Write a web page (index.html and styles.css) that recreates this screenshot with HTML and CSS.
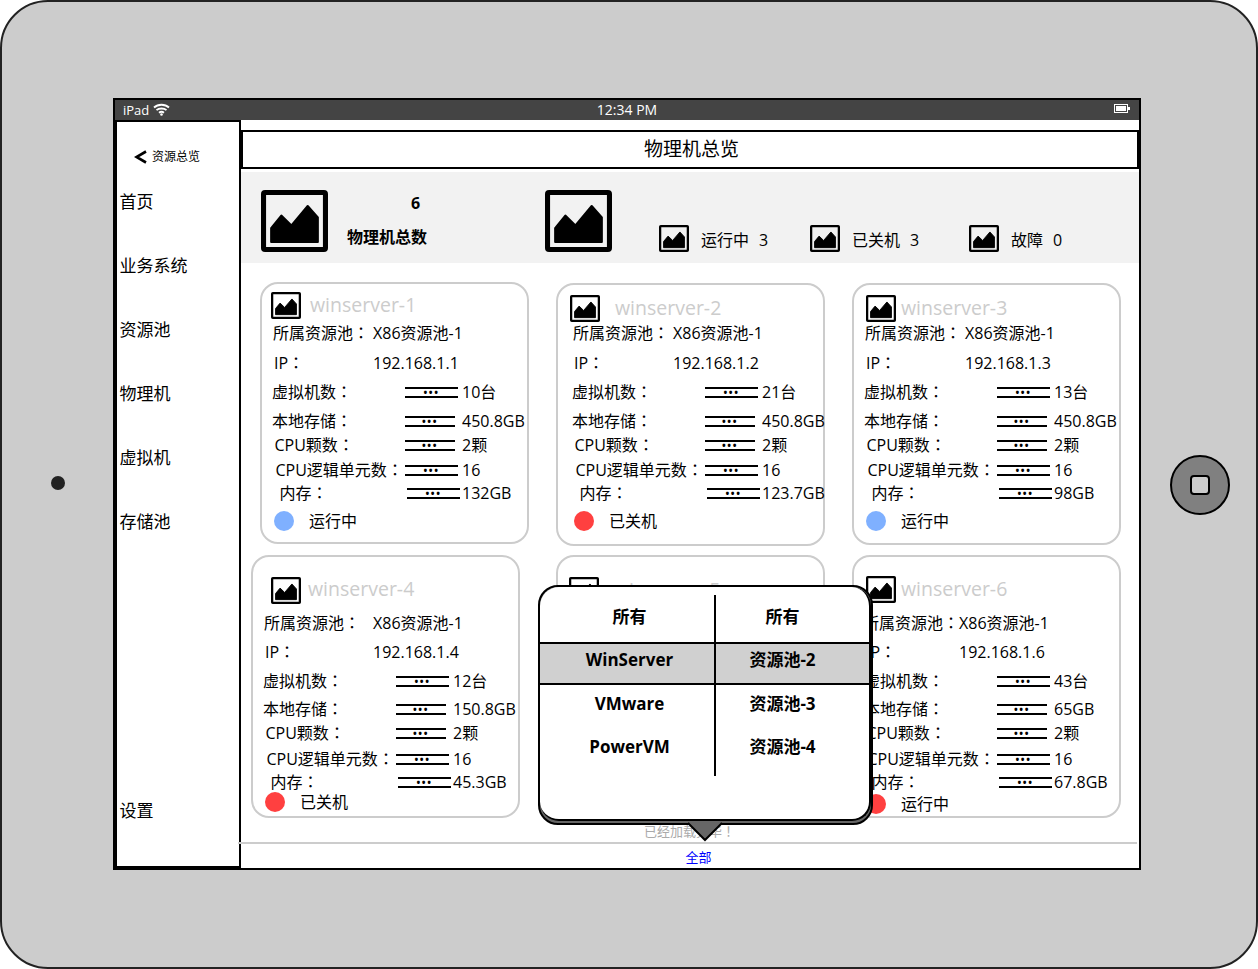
FILE: index.html
```html
<!DOCTYPE html>
<html>
<head>
<meta charset="utf-8">
<title>物理机总览</title>
<link rel="stylesheet" href="styles.css">
</head>
<body>
<svg class="defs" width="0" height="0" aria-hidden="true">
  <symbol id="pic" viewBox="0 0 66 62" preserveAspectRatio="none">
    <rect x="2.5" y="2.5" width="61" height="57" rx="1.5" fill="none" stroke="#000" stroke-width="5"/>
    <path d="M10 52V38L20 25.500 30 35.500 46 16 56 27.500V52Z" fill="#000" stroke="#000" stroke-width="2" stroke-linejoin="round"/>
  </symbol>
</svg>
<div class="device">
  <div class="camera"></div>
  <div class="screen">
    <div class="statusbar">
      <div class="status-left">
        <span>iPad</span>
        <svg class="wifi" width="17" height="13" viewBox="0 0 17 13"><path d="M1 4.500C5 .8 12 .8 16 4.500M3.500 7.200C6 4.900 11 4.900 13.500 7.200M6 9.700C7.300 8.700 9.700 8.700 11 9.700" fill="none" stroke="#fff" stroke-width="1.800"/><circle cx="8.500" cy="11.500" r="1.300" fill="#fff"/></svg>
      </div>
      <span class="clock">12:34 PM</span>
      <svg class="battery" width="16" height="9" viewBox="0 0 16 9"><rect x=".5" y=".5" width="13" height="8" fill="none" stroke="#fff"/><rect x="2" y="2" width="10" height="5" fill="#fff"/><rect x="14" y="3" width="2" height="3" fill="#fff"/></svg>
    </div>
    <div class="workspace">
      <nav class="sidebar">
        <div class="back">
          <svg class="chevron" width="13" height="14" viewBox="0 0 13 14"><path d="M12 1.500 2.500 7 12 12.500" fill="none" stroke="#000" stroke-width="2.600"/></svg>
          <span>资源总览</span>
        </div>
        <a class="nav-item">首页</a>
        <a class="nav-item">业务系统</a>
        <a class="nav-item">资源池</a>
        <a class="nav-item">物理机</a>
        <a class="nav-item">虚拟机</a>
        <a class="nav-item">存储池</a>
        <a class="nav-item nav-end">设置</a>
      </nav>
      <main class="main">
        <h1 class="title">物理机总览</h1>
        <section class="summary">
          <svg class="pic-big"><use href="#pic"/></svg>
          <div class="total"><b class="total-num">6</b><b class="total-label">物理机总数</b></div>
          <svg class="pic-big second"><use href="#pic"/></svg>
          <div class="stat first"><svg class="pic-small"><use href="#pic"/></svg><span class="stat-label">运行中</span><span>3</span></div>
          <div class="stat"><svg class="pic-small"><use href="#pic"/></svg><span class="stat-label">已关机</span><span>3</span></div>
          <div class="stat third"><svg class="pic-small"><use href="#pic"/></svg><span class="stat-label">故障</span><span>0</span></div>
        </section>
        <section class="cards">
          <article class="card card-1">
            <header class="head"><svg class="pic-small"><use href="#pic"/></svg><span class="name">winserver-1</span></header>
            <div class="row pool"><span class="lab">所属资源池<span class="colon">：</span></span><span>X86资源池-1</span></div>
            <div class="row ip"><span class="lab">IP<span class="colon">：</span></span><span>192.168.1.1</span></div>
            <div class="row vm"><span class="lab">虚拟机数<span class="colon">：</span></span><span class="gauge"><i>•••</i></span><span>10台</span></div>
            <div class="row store"><span class="lab">本地存储<span class="colon">：</span></span><span class="gauge"><i>•••</i></span><span>450.8GB</span></div>
            <div class="row cpu"><span class="lab">CPU颗数<span class="colon">：</span></span><span class="gauge"><i>•••</i></span><span>2颗</span></div>
            <div class="row logic"><span class="lab">CPU逻辑单元数<span class="colon">：</span></span><span class="gauge"><i>•••</i></span><span>16</span></div>
            <div class="row mem"><span class="lab">内存<span class="colon">：</span></span><span class="gauge"><i>•••</i></span><span>132GB</span></div>
            <div class="row state"><span class="dot on"></span><span>运行中</span></div>
          </article>
          <article class="card card-2">
            <header class="head"><svg class="pic-small"><use href="#pic"/></svg><span class="name">winserver-2</span></header>
            <div class="row pool"><span class="lab">所属资源池<span class="colon">：</span></span><span>X86资源池-1</span></div>
            <div class="row ip"><span class="lab">IP<span class="colon">：</span></span><span>192.168.1.2</span></div>
            <div class="row vm"><span class="lab">虚拟机数<span class="colon">：</span></span><span class="gauge"><i>•••</i></span><span>21台</span></div>
            <div class="row store"><span class="lab">本地存储<span class="colon">：</span></span><span class="gauge"><i>•••</i></span><span>450.8GB</span></div>
            <div class="row cpu"><span class="lab">CPU颗数<span class="colon">：</span></span><span class="gauge"><i>•••</i></span><span>2颗</span></div>
            <div class="row logic"><span class="lab">CPU逻辑单元数<span class="colon">：</span></span><span class="gauge"><i>•••</i></span><span>16</span></div>
            <div class="row mem"><span class="lab">内存<span class="colon">：</span></span><span class="gauge"><i>•••</i></span><span>123.7GB</span></div>
            <div class="row state"><span class="dot off"></span><span>已关机</span></div>
          </article>
          <article class="card card-3">
            <header class="head"><svg class="pic-small"><use href="#pic"/></svg><span class="name">winserver-3</span></header>
            <div class="row pool"><span class="lab">所属资源池<span class="colon">：</span></span><span>X86资源池-1</span></div>
            <div class="row ip"><span class="lab">IP<span class="colon">：</span></span><span>192.168.1.3</span></div>
            <div class="row vm"><span class="lab">虚拟机数<span class="colon">：</span></span><span class="gauge"><i>•••</i></span><span>13台</span></div>
            <div class="row store"><span class="lab">本地存储<span class="colon">：</span></span><span class="gauge"><i>•••</i></span><span>450.8GB</span></div>
            <div class="row cpu"><span class="lab">CPU颗数<span class="colon">：</span></span><span class="gauge"><i>•••</i></span><span>2颗</span></div>
            <div class="row logic"><span class="lab">CPU逻辑单元数<span class="colon">：</span></span><span class="gauge"><i>•••</i></span><span>16</span></div>
            <div class="row mem"><span class="lab">内存<span class="colon">：</span></span><span class="gauge"><i>•••</i></span><span>98GB</span></div>
            <div class="row state"><span class="dot on"></span><span>运行中</span></div>
          </article>
          <article class="card card-4">
            <header class="head"><svg class="pic-small"><use href="#pic"/></svg><span class="name">winserver-4</span></header>
            <div class="row pool"><span class="lab">所属资源池<span class="colon">：</span></span><span>X86资源池-1</span></div>
            <div class="row ip"><span class="lab">IP<span class="colon">：</span></span><span>192.168.1.4</span></div>
            <div class="row vm"><span class="lab">虚拟机数<span class="colon">：</span></span><span class="gauge"><i>•••</i></span><span>12台</span></div>
            <div class="row store"><span class="lab">本地存储<span class="colon">：</span></span><span class="gauge"><i>•••</i></span><span>150.8GB</span></div>
            <div class="row cpu"><span class="lab">CPU颗数<span class="colon">：</span></span><span class="gauge"><i>•••</i></span><span>2颗</span></div>
            <div class="row logic"><span class="lab">CPU逻辑单元数<span class="colon">：</span></span><span class="gauge"><i>•••</i></span><span>16</span></div>
            <div class="row mem"><span class="lab">内存<span class="colon">：</span></span><span class="gauge"><i>•••</i></span><span>45.3GB</span></div>
            <div class="row state"><span class="dot off"></span><span>已关机</span></div>
          </article>
          <article class="card card-5">
            <header class="head"><svg class="pic-small"><use href="#pic"/></svg><span class="name">winserver-5</span></header>
          </article>
          <article class="card card-6">
            <header class="head"><svg class="pic-small"><use href="#pic"/></svg><span class="name">winserver-6</span></header>
            <div class="row pool"><span class="lab">所属资源池<span class="colon">：</span></span><span>X86资源池-1</span></div>
            <div class="row ip"><span class="lab">IP<span class="colon">：</span></span><span>192.168.1.6</span></div>
            <div class="row vm"><span class="lab">虚拟机数<span class="colon">：</span></span><span class="gauge"><i>•••</i></span><span>43台</span></div>
            <div class="row store"><span class="lab">本地存储<span class="colon">：</span></span><span class="gauge"><i>•••</i></span><span>65GB</span></div>
            <div class="row cpu"><span class="lab">CPU颗数<span class="colon">：</span></span><span class="gauge"><i>•••</i></span><span>2颗</span></div>
            <div class="row logic"><span class="lab">CPU逻辑单元数<span class="colon">：</span></span><span class="gauge"><i>•••</i></span><span>16</span></div>
            <div class="row mem"><span class="lab">内存<span class="colon">：</span></span><span class="gauge"><i>•••</i></span><span>67.8GB</span></div>
            <div class="row state"><span class="dot off"></span><span>运行中</span></div>
          </article>
        </section>
        <p class="loaded">已经加载完毕<span class="colon">！</span></p>
        <footer class="tabbar"><a class="tab">全部</a></footer>
      </main>
    </div>
    <div class="popover">
      <div class="pop-panel">
        <div class="pop-row pop-first"><b class="pop-a">所有</b><b class="pop-b">所有</b></div>
        <div class="pop-row pop-sel"><b class="pop-a">WinServer</b><b class="pop-b">资源池-2</b></div>
        <div class="pop-row pop-third"><b class="pop-a">VMware</b><b class="pop-b">资源池-3</b></div>
        <div class="pop-row pop-fourth"><b class="pop-a">PowerVM</b><b class="pop-b">资源池-4</b></div>
      </div>
      <svg class="pop-arrow" width="36" height="20" viewBox="0 0 36 20"><path d="M1 1 18 18 35 1" fill="#666" stroke="#000" stroke-width="2"/></svg>
    </div>
  </div>
  <div class="home"><span class="home-key"></span></div>
</div>
</body>
</html>
```

FILE: styles.css
```css
* { box-sizing: border-box; }
html, body { margin: 0; padding: 0; background: #fff; }
body {
  width: 1258px;
  height: 969px;
  overflow: hidden;
  font-family: "Open Sans", "Noto Sans CJK SC", sans-serif;
  font-size: 16px;
  line-height: 20px;
  color: #000;
}
.defs { position: absolute; }
.colon { font-family: "Noto Sans CJK TC", sans-serif; line-height: 0; }

.device {
  width: 1258px;
  height: 969px;
  background: #ccc;
  border: 2px solid #222;
  border-radius: 48px;
  display: flex;
  align-items: center;
}
.camera {
  width: 14px;
  height: 14px;
  margin-left: 49px;
  margin-top: -3px;
  border-radius: 50%;
  background: #222;
  flex: none;
}
.screen {
  position: relative;
  width: 1028px;
  height: 772px;
  margin-left: 48px;
  margin-top: -1px;
  border: 2px solid #000;
  background: #fff;
  flex: none;
}
.home {
  width: 60px;
  height: 60px;
  margin-left: 29px;
  margin-top: 1px;
  border: 2px solid #000;
  border-radius: 50%;
  background: #808080;
  display: flex;
  align-items: center;
  justify-content: center;
  flex: none;
}
.home-key {
  width: 20px;
  height: 20px;
  border: 2px solid #000;
  border-radius: 4px;
  background: #ccc;
  margin: 0 1px 1px 0;
}

.statusbar {
  height: 20px;
  background: #444;
  color: #fff;
  font-size: 13px;
  display: grid;
  grid-template-columns: 1fr auto 1fr;
  align-items: center;
  padding: 0 9px 0 8px;
}
.status-left { display: flex; align-items: center; gap: 4px; }
.clock { font-size: 14px; margin-left: 1px; }
.wifi { margin-top: -2px; }
.battery { justify-self: end; margin-top: -4px; }

.workspace { display: flex; height: 748px; }
.sidebar {
  width: 126px;
  flex: none;
  border: 2px solid #000;
  display: flex;
  flex-direction: column;
  padding: 24px 0 45px 2.500px;
  font-size: 17px;
}
.back {
  display: flex;
  align-items: center;
  gap: 5px;
  height: 20px;
  margin-left: 14.500px;
  margin-top: 1px;
  font-size: 12px;
  margin-bottom: 25px;
}
.nav-item { display: block; height: 20px; margin-bottom: 44px; }
.nav-end { margin-top: auto; margin-bottom: 0; }

.main { width: 898px; flex: none; display: flex; flex-direction: column; }
.title {
  margin: 10px 0 0;
  height: 39px;
  border: 2px solid #000;
  padding-left: 3px;
  font-size: 19px;
  font-weight: 400;
  line-height: 35px;
  text-align: center;
}
.summary {
  height: 91px;
  margin-top: 3px;
  background: #f2f2f2;
  display: flex;
  align-items: flex-start;
}
.pic-big { width: 67px; height: 62px; margin: 18px 0 0 20px; flex: none; }
.pic-big.second { margin-left: 0; }
.pic-small { width: 30px; height: 27px; flex: none; display: block; }
.total { width: 217px; display: flex; flex-direction: column; padding-left: 19px; }
.total-num { margin-top: 21px; width: 80px; padding-left: 64px; }
.total-label { margin-top: 14px; }
.stat { display: flex; align-items: center; margin-top: 53px; height: 27px; width: 151px; }
.stat span { margin-top: 2px; }
.stat.first { margin-left: 47px; }
.stat.third { margin-left: 8px; }
.stat-label { margin: 0 10px 0 12px; }

.cards {
  margin-top: 20px;
  padding-left: 19px;
  display: grid;
  grid-template-columns: repeat(3, 269px);
  grid-auto-rows: 263px;
  column-gap: 27px;
  row-gap: 9px;
  align-items: start;
}
.card {
  width: 269px;
  background: #fff;
  border: 2px solid #ccc;
  border-radius: 18px;
  height: 263px;
}
.head { display: flex; align-items: center; height: 27px; margin-top: 10px; margin-left: 12px; }
.name { color: #ccc; font-size: 19.500px; margin-left: 4px; margin-top: -2px; }
.row { display: flex; align-items: center; height: 20px; white-space: nowrap; margin-top: 9px; }
.lab { flex: none; width: 143px; }
.row > .lab { padding-left: 10px; }
.pool .lab { width: 111px; padding-left: 11px; }
.ip .lab { width: 111px; padding-left: 12px; }
.row.cpu .lab { padding-left: 12.500px; }
.row.logic .lab { padding-left: 13.500px; }
.row.mem .lab { padding-left: 17.500px; width: 145px; }
.pool { margin-top: 1px; }
.ip { margin-top: 10px; }
.store { margin-top: 9px; }
.cpu { margin-top: 4px; }
.logic { margin-top: 5px; }
.mem { margin-top: 3px; }
.state { margin-top: 8px; padding-left: 12px; }
.gauge {
  width: 53px;
  height: 11px;
  margin-right: 4px;
  border-top: 2px solid #000;
  border-bottom: 2px solid #000;
  flex: none;
  display: flex;
  align-items: center;
  justify-content: center;
}
.gauge i {
  font-style: normal;
  font-size: 10px;
  font-weight: 700;
  line-height: 7px;
  letter-spacing: 1.500px;
}
.mem .gauge { margin-right: 2px; }
.store .gauge { width: 50px; margin-right: 7px; }
.cpu .gauge { width: 50px; margin-right: 7px; }
.dot { width: 20px; height: 20px; border-radius: 50%; margin-right: 15px; flex: none; }
.dot.on { background: #7fb0ff; }
.dot.off { background: #ff4040; }

.card-1 { margin-top: -1px; height: 262px; }
.card-1 .head { margin-top: 8px; margin-left: 9px; }
.card-1 .name { margin-left: 9px; }
.card-1 .pool { margin-top: 4px; }
.card-2 { padding-left: 4px; }
.card-2 .head { margin-left: 8px; }
.card-2 .name { margin-left: 15px; }
.card-3 { height: 262px; }
.card-3 .name { margin-left: 5px; }
.card-4 { margin-left: -9px; }
.card-4 .head { margin-top: 20px; margin-left: 18px; }
.card-4 .name { margin-left: 7px; margin-top: -3px; }
.card-4 .pool { margin-top: 9px; }
.card-6 .pool { margin-top: 10px; }
.card-4 .ip, .card-6 .ip { margin-top: 9px; }
.card-4 .store, .card-6 .store { margin-top: 8px; }
.card-4 .logic, .card-6 .logic { margin-top: 6px; }
.card-4 .state { margin-top: 0; }
.card-6 .state { margin-top: 2px; }
.card-4 .pool .lab, .card-4 .ip .lab { width: 120px; }
.card-5 { height: 268px; }
.card-5 .head { margin-top: 20px; margin-left: 11px; }
.card-5 .name { margin-left: 15px; }
.card-6 .head { margin-top: 19px; margin-left: 12px; }
.card-6 .name { margin-left: 5px; }
.card-6 .pool .lab { width: auto; padding-left: 9px; }
.card-6 .ip .lab { width: 105px; }

.loaded {
  margin: 3px 0 0;
  height: 20px;
  padding-left: 403px;
  font-size: 13px;
  line-height: 20px;
  color: #aaa;
}
.tabbar {
  margin-left: -3px;
  margin-right: 2px;
  margin-top: 1px;
  border-top: 2px solid #ccc;
  text-align: center;
  font-size: 13px;
  padding: 3px 0 0 22px;
}
.tab { color: #00f; display: inline-block; }

.popover {
  position: absolute;
  left: 423px;
  top: 485px;
  width: 335px;
  height: 240px;
  border: 2px solid #000;
  border-radius: 20px;
  background: #666;
}
.pop-panel {
  height: 234px;
  width: 331px;
  background: #fff;
  border-radius: 19px;
  border-bottom: 2px solid #000;
  border-right: 2px solid #000;
  padding-top: 8px;
  overflow: hidden;
  font-size: 17px;
}
.pop-row { display: grid; grid-template-columns: 176px 1fr; }
.pop-row b { display: flex; align-items: center; justify-content: center; }
.pop-a { border-right: 2px solid #000; padding-left: 5px; }
.pop-b { padding-right: 20px; }
.pop-first { height: 49px; border-bottom: 2px solid #000; }
.pop-first b { padding-bottom: 4px; }
.pop-sel { height: 41px; background: #d0d0d0; border-bottom: 2px solid #000; }
.pop-sel b { padding-bottom: 7px; }
.pop-third { height: 38px; }
.pop-fourth { height: 53px; }
.pop-fourth b { padding-bottom: 6px; }
.pop-arrow { position: absolute; left: 147px; top: 235px; }
```
